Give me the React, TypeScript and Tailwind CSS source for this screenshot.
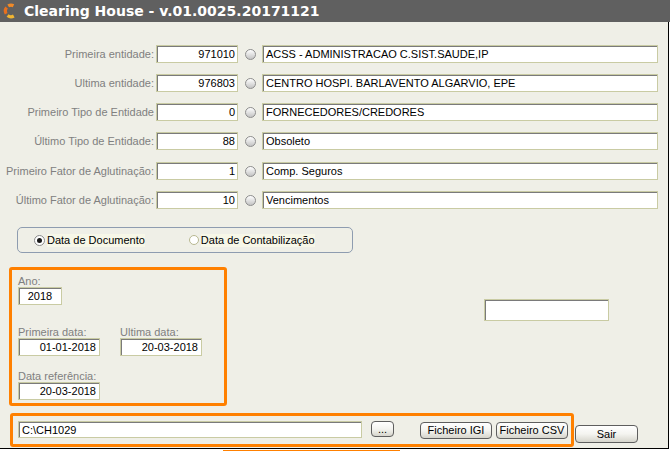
import React from "react";

const inputBase =
  "bg-white border border-[#c9cba3] shadow-[inset_1px_1px_0_#7a7a7a] text-[11px] text-black leading-[16px] px-[3px] overflow-hidden whitespace-nowrap";

const btn =
  "flex items-center justify-center rounded-[4px] border border-[#5e5e5e] bg-linear-to-b from-white via-[#f4f4f0] to-[#d6d5cc] text-[11px] text-black leading-none";

function RoundBtn() {
  return (
    <div className="w-[11px] h-[11px] rounded-full border border-[#8d8d8d] bg-linear-to-b from-white to-[#c4c4c4]" />
  );
}

function TitleIcon() {
  return (
    <svg width="16" height="16" viewBox="0 0 16 16">
      <path d="M3.2 10.8 A5.6 5.6 0 0 1 3.6 4.5" stroke="#e8701e" strokeWidth="3.2" fill="none" />
      <path d="M5.2 2.9 A5.6 5.6 0 0 1 10.5 2.7" stroke="#f08a28" strokeWidth="3.2" fill="none" />
      <path d="M4.6 12.6 A5.6 5.6 0 0 0 10.8 13" stroke="#f2b632" strokeWidth="3.2" fill="none" />
    </svg>
  );
}

const rows = [
  { label: "Primeira entidade:", val: "971010", desc: "ACSS - ADMINISTRACAO C.SIST.SAUDE,IP", mt: "mt-0" },
  { label: "Ultima entidade:", val: "976803", desc: "CENTRO HOSPI. BARLAVENTO ALGARVIO, EPE", mt: "mt-[11px]" },
  { label: "Primeiro Tipo de Entidade", val: "0", desc: "FORNECEDORES/CREDORES", mt: "mt-[11px]" },
  { label: "Último Tipo de Entidade:", val: "88", desc: "Obsoleto", mt: "mt-[11px]" },
  { label: "Primeiro Fator de Aglutinação:", val: "1", desc: "Comp. Seguros", mt: "mt-[12px]" },
  { label: "Último Fator de Aglutinação:", val: "10", desc: "Vencimentos", mt: "mt-[11px]" },
];

export default function App() {
  return (
    <div className="w-[670px] h-[451px] bg-white font-['Liberation_Sans',Arial,sans-serif] overflow-hidden">
      <div className="h-[22px] w-[670px] bg-[#606060] flex items-center">
        <div className="ml-[3px] w-[16px] h-[16px] flex items-center justify-center">
          <TitleIcon />
        </div>
        <div className="ml-[5px] text-white font-bold text-[14px] font-['DejaVu_Sans',Verdana,sans-serif] tracking-[0px] leading-none">
          Clearing House - v.01.0025.20171121
        </div>
      </div>
      <div className="w-[669px] h-[427px] bg-[#efefe7] border-r border-b border-black flex flex-col pt-[23px]">
        {rows.map((r) => (
          <div key={r.label} className={`flex items-center h-[18px] ${r.mt}`}>
            <div className="w-[154px] text-right text-[11px] text-[#808080] whitespace-nowrap leading-none">
              {r.label}
            </div>
            <div className={`${inputBase} ml-[2px] w-[82px] h-[18px] text-right pr-[2px]`}>{r.val}</div>
            <div className="ml-[7px]">
              <RoundBtn />
            </div>
            <div className={`${inputBase} ml-[6px] w-[396px] h-[18px]`}>{r.desc}</div>
          </div>
        ))}

        <div className="ml-[17px] mt-[18px] w-[336px] h-[26px] rounded-[5px] border border-[#8e9cb0] flex items-center text-[11px] text-black">
          <div className="ml-[16px] w-[11px] h-[11px] rounded-full border border-[#8b8b8b] bg-white flex items-center justify-center">
            <div className="w-[5px] h-[5px] rounded-full bg-[#1a1a1a]" />
          </div>
          <span className="ml-[2px] bg-[#f7f7e8] leading-[13px]">Data de Documento</span>
          <div className="ml-[44px] w-[10px] h-[10px] rounded-full border border-[#b8b890] bg-white" />
          <span className="ml-[2px] bg-[#f7f7e8] leading-[13px]">Data de Contabilização</span>
        </div>

        <div className="flex mt-[14px]">
          <div className="ml-[9px] w-[218px] h-[139px] border-[3px] border-[#ff8000] rounded-[3px] pl-[6px] pt-[5px] flex flex-col text-[11px] text-[#808080]">
            <div className="h-[12px] leading-[12px]">Ano:</div>
            <div className={`${inputBase} w-[44px] h-[18px] text-center`}>2018</div>
            <div className="flex mt-[21px]">
              <div className="flex flex-col w-[82px]">
                <div className="h-[12px] leading-[12px]">Primeira data:</div>
                <div className={`${inputBase} w-[82px] h-[18px] text-right`}>01-01-2018</div>
              </div>
              <div className="flex flex-col w-[82px] ml-[20px]">
                <div className="h-[12px] leading-[12px]">Ultima data:</div>
                <div className={`${inputBase} w-[82px] h-[18px] text-right`}>20-03-2018</div>
              </div>
            </div>
            <div className="mt-[14px] h-[12px] leading-[12px]">Data referência:</div>
            <div className={`${inputBase} w-[82px] h-[18px] text-right`}>20-03-2018</div>
          </div>
          <div className={`${inputBase} ml-[257px] mt-[32px] w-[125px] h-[22px]`} />
        </div>

        <div className="flex mt-[7px]">
          <div className="ml-[10px] w-[564px] h-[34px] border-[3px] border-[#ff8000] rounded-[3px] flex items-start pl-[5px] pt-[5px]">
            <div className={`${inputBase} w-[344px] h-[17px]`}>C:\CH1029</div>
            <div className={`${btn} ml-[9px] w-[23px] h-[16px]`}>...</div>
            <div className={`${btn} ml-[26px] w-[72px] h-[17px] mt-[1px]`}>Ficheiro IGI</div>
            <div className={`${btn} ml-[4px] w-[72px] h-[17px] mt-[1px]`}>Ficheiro CSV</div>
          </div>
          <div className={`${btn} ml-px mt-[12px] w-[63px] h-[18px]`}>Sair</div>
        </div>
      </div>
      <div className="ml-[223px] mt-px h-px w-[177px] bg-[#ff8000]" />
    </div>
  );
}
